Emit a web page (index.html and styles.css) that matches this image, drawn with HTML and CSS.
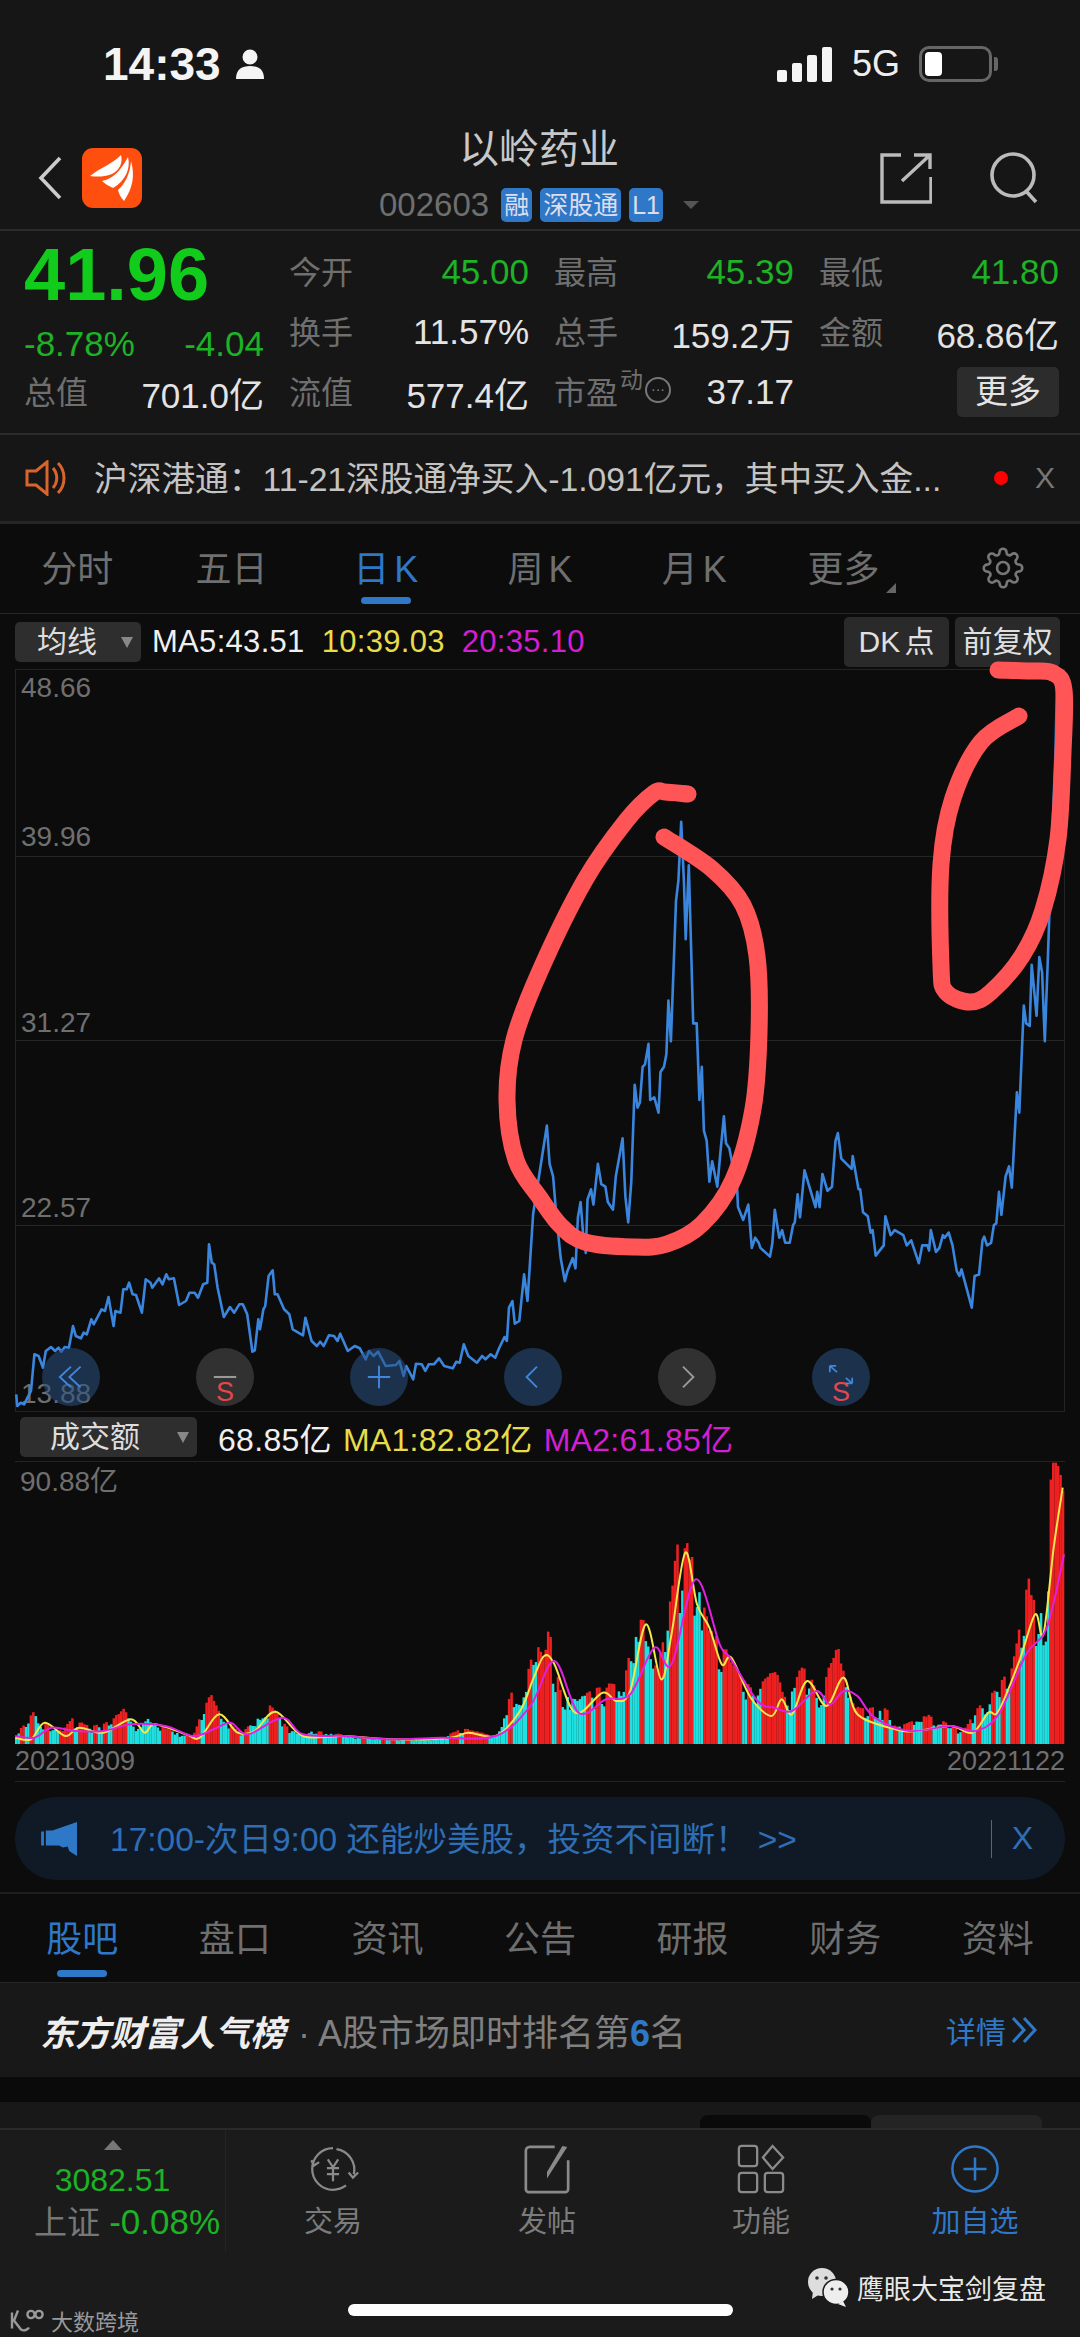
FILE: index.html
```html
<!DOCTYPE html>
<html lang="zh-CN">
<head>
  <meta charset="UTF-8">
  <meta name="viewport" content="width=device-width, initial-scale=1.0">
  <title>以岭药业</title>
  <link rel="stylesheet" href="styles.css">
</head>
<body>
  <div class="page">
    <div class="status-bar">
      <div class="status-time">14:33
        <svg class="person" viewBox="0 0 30 30"><circle cx="15" cy="8" r="7.5"/><path d="M1 30c0-10 6-13 14-13s14 3 14 13z"/></svg>
      </div>
      <div class="status-right">
        <div class="signal"><i class="s1"></i><i class="s2"></i><i class="s3"></i><i class="s4"></i></div>
        <span class="net">5G</span>
        <div class="battery"><i></i></div>
        <div class="battery-cap"></div>
      </div>
    </div>

    <div class="header">
      <div class="header-left">
        <svg class="back" viewBox="0 0 24 44"><path d="M22 2 3 22l19 20" fill="none" stroke="#ccc" stroke-width="3.6"/></svg>
        <svg class="logo" viewBox="0 0 60 60">
          <rect width="60" height="60" rx="11" fill="#ff4f0e"/>
          <path d="M8 28C18 20 30 16 39 7c2 7-1 15-9 19-8 3-15 3-22 2z" fill="#fff"/>
          <path d="M20 33c10-2 18-9 26-24 3 12-3 24-15 31-4-2-8-4-11-7z" fill="#fff"/>
          <path d="M36 42c7-6 12-16 13-29 4 14 2 27-7 40-3-3-5-7-6-11z" fill="#fff"/>
        </svg>
      </div>
      <div class="header-mid">
        <div class="stock-name">以岭药业</div>
        <div class="stock-code">
          <span class="code">002603</span>
          <span class="tag">融</span>
          <span class="tag">深股通</span>
          <span class="tag">L1</span>
          <span class="tri-down"></span>
        </div>
      </div>
      <div class="header-right">
        <svg class="share" viewBox="0 0 52 52"><path d="M21 3H2v47h49V25M22 29 50 3M34 3h16v14" fill="none" stroke="#bbb" stroke-width="3.4"/></svg>
        <svg class="search" viewBox="0 0 52 52"><circle cx="25" cy="23" r="21" fill="none" stroke="#bbb" stroke-width="3.6"/><path d="m38 39 10 11" stroke="#bbb" stroke-width="3.6"/></svg>
      </div>
    </div>

    <div class="quote">
      <div class="price-cell">
        <div class="price">41.96</div>
        <div class="change"><span>-8.78%</span><span>-4.04</span></div>
      </div>
      <div class="kv"><span class="k">今开</span><span class="v up">45.00</span></div>
      <div class="kv"><span class="k">最高</span><span class="v up">45.39</span></div>
      <div class="kv"><span class="k">最低</span><span class="v up">41.80</span></div>
      <div class="kv"><span class="k">换手</span><span class="v">11.57%</span></div>
      <div class="kv"><span class="k">总手</span><span class="v">159.2万</span></div>
      <div class="kv"><span class="k">金额</span><span class="v">68.86亿</span></div>
      <div class="kv"><span class="k">总值</span><span class="v">701.0亿</span></div>
      <div class="kv"><span class="k">流值</span><span class="v">577.4亿</span></div>
      <div class="kv">
        <span class="k pe">市盈<sup>动</sup><span class="more-dot">···</span></span>
        <span class="v">37.17</span>
      </div>
      <div class="kv kv-btn"><span class="more-btn">更多</span></div>
    </div>

    <div class="notice">
      <svg class="horn" viewBox="0 0 42 36"><path d="M2 11h9L22 2v32L11 25H2zM28 8c5 6 5 14 0 20M33 3c8 8 8 22 0 30" fill="none" stroke="#d9652a" stroke-width="3"/></svg>
      <div class="notice-text">沪深港通：11-21深股通净买入-1.091亿元，其中买入金...</div>
      <span class="red-dot"></span>
      <span class="notice-x">X</span>
    </div>

    <div class="tabs k-tabs">
      <div class="tab">分时</div>
      <div class="tab">五日</div>
      <div class="tab active">日 K</div>
      <div class="tab">周 K</div>
      <div class="tab">月 K</div>
      <div class="tab tab-more">更多<i></i></div>
      <div class="tab">
        <svg class="gear" viewBox="0 0 24 24" fill="none" stroke="#777" stroke-width="1.5"><circle cx="12" cy="12" r="3.4"/><path d="M19.4 15a1.65 1.65 0 0 0 .33 1.82l.06.06a2 2 0 0 1 0 2.83 2 2 0 0 1-2.83 0l-.06-.06a1.65 1.65 0 0 0-1.82-.33 1.65 1.65 0 0 0-1 1.51V21a2 2 0 0 1-2 2 2 2 0 0 1-2-2v-.09A1.65 1.65 0 0 0 9 19.4a1.65 1.65 0 0 0-1.82.33l-.06.06a2 2 0 0 1-2.83 0 2 2 0 0 1 0-2.83l.06-.06a1.65 1.65 0 0 0 .33-1.82 1.65 1.65 0 0 0-1.51-1H3a2 2 0 0 1-2-2 2 2 0 0 1 2-2h.09A1.65 1.65 0 0 0 4.6 9a1.65 1.65 0 0 0-.33-1.82l-.06-.06a2 2 0 0 1 0-2.83 2 2 0 0 1 2.83 0l.06.06a1.65 1.65 0 0 0 1.82.33H9a1.65 1.65 0 0 0 1-1.51V3a2 2 0 0 1 2-2 2 2 0 0 1 2 2v.09a1.65 1.65 0 0 0 1 1.51 1.65 1.65 0 0 0 1.82-.33l.06-.06a2 2 0 0 1 2.83 0 2 2 0 0 1 0 2.83l-.06.06a1.65 1.65 0 0 0-.33 1.82V9a1.65 1.65 0 0 0 1.51 1H21a2 2 0 0 1 2 2 2 2 0 0 1-2 2h-.09a1.65 1.65 0 0 0-1.51 1z"/></svg>
      </div>
    </div>

    <div class="chart-bar">
      <div class="select select-ma">均线<i></i></div>
      <span class="ma-text white">MA5:43.51</span>
      <span class="ma-text yellow">10:39.03</span>
      <span class="ma-text magenta">20:35.10</span>
      <div class="bar-btns">
        <span class="bar-btn">DK 点</span>
        <span class="bar-btn">前复权</span>
      </div>
    </div>

    <div class="price-chart">
      <div class="grid-row grid-first"><span>48.66</span><span>39.96</span></div>
      <div class="grid-row grid-b"><span>31.27</span></div>
      <div class="grid-row grid-c"><span>22.57</span></div>
      <div class="grid-row grid-d"><span>13.88</span></div>
      <svg id="priceLine" class="price-line" viewBox="15 668 1050 743"></svg>
      <div class="float-btns">
        <div class="float-btn blue"><svg viewBox="0 0 40 40"><path d="M20 7 6 20l14 13M32 7 18 20l14 13" fill="none" stroke="#3f86dc" stroke-width="2.4"/></svg></div>
        <div class="float-btn grey"><svg viewBox="0 0 40 40"><path d="M6 20h28" stroke="#999" stroke-width="2.6"/></svg><b>S</b></div>
        <div class="float-btn blue"><svg viewBox="0 0 40 40"><path d="M6 20h28M20 6v28" stroke="#3f86dc" stroke-width="2.4"/></svg></div>
        <div class="float-btn blue"><svg viewBox="0 0 40 40"><path d="M25 7 12 20l13 13" fill="none" stroke="#3f86dc" stroke-width="2.4"/></svg></div>
        <div class="float-btn grey"><svg viewBox="0 0 40 40"><path d="m15 7 13 13-13 13" fill="none" stroke="#999" stroke-width="2.4"/></svg></div>
        <div class="float-btn blue"><svg viewBox="0 0 40 40"><path d="M6 6l9 8M6 6v8M6 6h8M34 28l-8-7M34 28v-7M34 28h-8" fill="none" stroke="#3f86dc" stroke-width="2.2"/></svg><b>S</b></div>
      </div>
    </div>

    <div class="chart-bar vol-bar">
      <div class="select select-vol">成交额<i></i></div>
      <span class="ma-text white">68.85亿</span>
      <span class="ma-text yellow">MA1:82.82亿</span>
      <span class="ma-text magenta">MA2:61.85亿</span>
    </div>

    <div class="vol-chart">
      <span class="vol-max">90.88亿</span>
      <svg id="volBars" class="vol-svg" viewBox="15 1461 1050 282"></svg>
    </div>

    <div class="dates"><span>20210309</span><span>20221122</span></div>

    <div class="banner-wrap">
      <div class="banner">
        <svg class="mega" viewBox="0 0 40 36"><path d="M0 10h3v15H0zM5 9h7L38 0v36l-8-5-2-5-5 1-4-2H5z" fill="#2f78c8"/></svg>
        <div class="banner-text">17:00-次日9:00 还能炒美股，投资不间断！ &gt;&gt;</div>
        <span class="banner-sep"></span>
        <span class="banner-x">X</span>
      </div>
    </div>

    <div class="tabs bottom-tabs">
      <div class="tab active">股吧</div>
      <div class="tab">盘口</div>
      <div class="tab">资讯</div>
      <div class="tab">公告</div>
      <div class="tab">研报</div>
      <div class="tab">财务</div>
      <div class="tab">资料</div>
    </div>

    <div class="rank">
      <span class="rank-title">东方财富人气榜</span>
      <span class="rank-text">· A股市场即时排名第<b>6</b>名</span>
      <span class="rank-link">详情<svg viewBox="0 0 30 30"><path d="M3 3l11 12L3 27M14 3l11 12-11 12" fill="none" stroke="#2f78c8" stroke-width="3"/></svg></span>
    </div>
    <div class="strip"></div>
    <div class="sub-area">
      <span class="mini mini-dark"></span>
      <span class="mini mini-light"></span>
    </div>

    <div class="bottom-bar">
      <div class="index-cell">
        <i class="tri-up"></i>
        <div class="index-val">3082.51</div>
        <div class="index-name">上证 <span>-0.08%</span></div>
      </div>
      <div class="nav-item">
        <svg viewBox="0 0 60 52" fill="none" stroke="#8a8a8a" stroke-width="2.6"><path d="M30 2a24 24 0 0 0 0 48c6 0 11-2 15-5M5 16l3 6 6-4M34 3a24 24 0 0 1 20 29M48 30l5 6 6-6M24 15l6 9 6-9M23 25h14M23 32h14M30 24v16"/></svg>
        <span>交易</span>
      </div>
      <div class="nav-item">
        <svg viewBox="0 0 52 52" fill="none" stroke="#8a8a8a" stroke-width="2.8"><path d="M34 3H8a4 4 0 0 0-4 4v40a3 3 0 0 0 3 3h38a3 3 0 0 0 3-3V17"/><path d="M47 3 26 36l0-7 16-27z" fill="#8a8a8a" stroke="none"/></svg>
        <span>发帖</span>
      </div>
      <div class="nav-item">
        <svg viewBox="0 0 52 52" fill="none" stroke="#8a8a8a" stroke-width="2.4"><rect x="3" y="2" width="19" height="21" rx="3"/><path d="M38 2 49 14 38 26 28 14z"/><rect x="3" y="30" width="19" height="20" rx="3"/><rect x="30" y="30" width="19" height="20" rx="3"/></svg>
        <span>功能</span>
      </div>
      <div class="nav-item nav-add">
        <svg viewBox="0 0 52 52" fill="none" stroke="#2f78c8" stroke-width="2.6"><circle cx="26" cy="26" r="23.5"/><path d="M14 26h24M26 14v24"/></svg>
        <span>加自选</span>
      </div>
    </div>

    <div class="wm-left">
      <svg viewBox="0 0 36 24" fill="none" stroke="#999" stroke-width="2.4"><path d="M3 4v16M9 2 5 12l7 9c3 2 7 0 8-2"/><circle cx="22" cy="6" r="3.6"/><circle cx="30" cy="6" r="3.6"/></svg>
      <span>大数跨境</span>
    </div>
    <div class="wm-right">
      <svg viewBox="0 0 44 40"><ellipse cx="15" cy="15" rx="14" ry="14" fill="#ddd"/><path d="M6 24l-1 8 8-5z" fill="#ddd"/><ellipse cx="29" cy="25" rx="13" ry="12.5" fill="#eee" stroke="#1b1b1b" stroke-width="1.5"/><path d="M36 34l3 6-8-3z" fill="#eee"/><circle cx="10" cy="11" r="1.8" fill="#333"/><circle cx="19" cy="11" r="1.8" fill="#333"/><circle cx="25" cy="22" r="1.6" fill="#333"/><circle cx="33" cy="22" r="1.6" fill="#333"/></svg>
      <span>鹰眼大宝剑复盘</span>
    </div>
    <div class="home-bar"></div>

    <svg id="marks" class="marks" viewBox="0 0 1080 2337"></svg>
  </div>
  <script src="chart.js"></script>
</body>
</html>
```

FILE: styles.css
```css
* {
  box-sizing: border-box;
}
body {
  margin: 0;
  background: #0c0c0c;
  font-family: "Liberation Sans", "Noto Sans CJK SC", sans-serif;
  color: #ddd;
}
.page {
  position: relative;
  width: 1080px;
  height: 2337px;
  overflow: hidden;
  background: #0c0c0c;
}

/* status bar */
.status-bar {
  height: 128px;
  padding: 0 82px 0 103px;
  background: #161616;
  display: flex;
  justify-content: space-between;
  align-items: center;
}
.status-time {
  display: flex;
  align-items: center;
  gap: 14px;
  font-size: 46px;
  font-weight: 700;
  color: #f4f4f4;
}
.person {
  width: 30px;
  height: 30px;
  fill: #f4f4f4;
}
.status-right {
  display: flex;
  align-items: center;
}
.signal {
  display: flex;
  align-items: flex-end;
  gap: 5px;
  height: 35px;
  margin-right: 20px;
}
.signal i {
  width: 10px;
  background: #f4f4f4;
  border-radius: 2px;
}
.s1 { height: 12px; }
.s2 { height: 19px; }
.s3 { height: 27px; }
.s4 { height: 35px; }
.net {
  font-size: 36px;
  color: #eee;
  margin-right: 19px;
}
.battery {
  width: 73px;
  height: 36px;
  border: 3px solid #666;
  border-radius: 10px;
  padding: 3px;
}
.battery i {
  display: block;
  width: 17px;
  height: 100%;
  background: #fff;
  border-radius: 4px;
}
.battery-cap {
  width: 4px;
  height: 14px;
  margin-left: 2px;
  background: #666;
  border-radius: 0 3px 3px 0;
}

/* header */
.header {
  height: 103px;
  padding: 0 40px 2px 38px;
  background: #161616;
  border-bottom: 2px solid #2b2b2b;
  display: grid;
  grid-template-columns: 1fr auto 1fr;
  align-items: center;
}
.header-left {
  display: flex;
  align-items: center;
  gap: 20px;
}
.back {
  width: 24px;
  height: 44px;
}
.logo {
  width: 60px;
  height: 60px;
}
.header-mid {
  align-self: start;
  display: flex;
  flex-direction: column;
  align-items: center;
}
.stock-name {
  font-size: 40px;
  line-height: 42px;
  color: #c8c8c8;
}
.stock-code {
  display: flex;
  align-items: center;
  gap: 8px;
  margin-top: 17px;
  height: 36px;
}
.code {
  font-size: 33px;
  color: #6f6f6f;
  margin-right: 4px;
}
.tag {
  height: 34px;
  padding: 0 3px;
  background: #2f78c8;
  border-radius: 5px;
  font-size: 25px;
  line-height: 34px;
  color: #dde;
}
.tri-down {
  margin-left: 12px;
  border-left: 8px solid transparent;
  border-right: 8px solid transparent;
  border-top: 8px solid #555;
}
.header-right {
  display: flex;
  justify-content: flex-end;
  align-items: center;
  gap: 56px;
}
.share, .search {
  width: 52px;
  height: 52px;
}

/* quote */
.quote {
  height: 204px;
  padding: 11px 22px 0 24px;
  background: #161616;
  border-bottom: 2px solid #2b2b2b;
  display: grid;
  grid-template-columns: repeat(4, 240px);
  grid-template-rows: repeat(3, 60px);
  column-gap: 25px;
}
.price-cell {
  grid-row: span 2;
}
.price {
  font-size: 74px;
  font-weight: 700;
  line-height: 66px;
  color: #12cc1c;
}
.change {
  display: flex;
  justify-content: space-between;
  margin-top: 16px;
  font-size: 35px;
  line-height: 40px;
  color: #1cb325;
}
.kv {
  display: flex;
  justify-content: space-between;
  align-items: center;
}
.k {
  font-size: 32px;
  padding-bottom: 5px;
  color: #6f6f6f;
}
.v {
  font-size: 35px;
  color: #e4e4e4;
}
.v.up {
  color: #1cb325;
}
.pe {
  display: flex;
  align-items: center;
}
.pe sup {
  font-size: 23px;
  line-height: 1;
  margin: -18px 2px 0 2px;
}
.more-dot {
  width: 26px;
  height: 26px;
  border: 2px solid #777;
  border-radius: 50%;
  font-size: 14px;
  line-height: 20px;
  text-align: center;
  color: #888;
}
.kv-btn {
  justify-content: flex-end;
}
.more-btn {
  width: 102px;
  height: 50px;
  background: #2c2c2c;
  border-radius: 5px;
  text-align: center;
  font-size: 33px;
  line-height: 50px;
  color: #e4e4e4;
}

/* notice */
.notice {
  height: 89px;
  padding: 0 25px;
  background: #161616;
  border-bottom: 3px solid #262626;
  display: flex;
  align-items: center;
}
.horn {
  width: 42px;
  height: 36px;
  margin-right: 27px;
}
.notice-text {
  flex: 1;
  padding-bottom: 4px;
  font-size: 33.7px;
  color: #c4c4c4;
  white-space: nowrap;
}
.red-dot {
  width: 14px;
  height: 14px;
  background: #f00;
  border-radius: 50%;
  margin-right: 27px;
}
.notice-x {
  font-size: 30px;
  color: #777;
}

/* tab rows */
.tabs {
  display: grid;
  grid-template-columns: repeat(7, 1fr);
  justify-items: center;
  align-items: start;
  border-bottom: 1px solid #262626;
}
.k-tabs {
  height: 90px;
  padding-top: 23px;
}
.bottom-tabs {
  height: 89px;
  padding: 23px 6px 0;
}
.tab {
  font-size: 36px;
  line-height: 46px;
  word-spacing: -5px;
  color: #6f6f6f;
  position: relative;
}
.tab.active {
  color: #2f78c8;
}
.tab.active::after {
  content: "";
  display: block;
  width: 50px;
  height: 7px;
  margin: 4px auto 0;
  background: #2f78c8;
  border-radius: 4px;
}
.bottom-tabs .tab.active::after {
  margin-top: 7px;
}
.tab-more {
  padding-right: 10px;
}
.tab-more i {
  position: absolute;
  right: -6px;
  bottom: 0;
  border-left: 10px solid transparent;
  border-bottom: 10px solid #666;
}
.gear {
  width: 42px;
  height: 42px;
  display: block;
}

/* chart toolbars */
.chart-bar {
  height: 55px;
  padding: 0 20px 0 15px;
  display: flex;
  align-items: center;
  gap: 17px;
}
.select {
  position: relative;
  height: 40px;
  background: #2e2e2e;
  border-radius: 5px;
  font-size: 30px;
  line-height: 40px;
  color: #ddd;
}
.select i {
  position: absolute;
  top: 15px;
  right: 8px;
  border-left: 6px solid transparent;
  border-right: 6px solid transparent;
  border-top: 11px solid #888;
}
.select-ma {
  width: 126px;
  padding-left: 22px;
  margin-right: -6px;
}
.select-vol {
  width: 177px;
  padding-left: 30px;
  margin-right: 10px;
}
.ma-text {
  font-size: 31px;
  letter-spacing: 0.3px;
  white-space: nowrap;
}
.white { color: #f0f0f0; }
.yellow { color: #e8dc4a; }
.magenta { color: #d21fd2; }
.bar-btns {
  margin-left: auto;
  display: flex;
  gap: 6px;
}
.bar-btn {
  width: 105px;
  height: 50px;
  background: #2a2a2a;
  border-radius: 5px;
  text-align: center;
  font-size: 30px;
  line-height: 50px;
  word-spacing: -4px;
  color: #e0e0e0;
}

/* price chart */
.price-chart {
  position: relative;
  height: 743px;
  margin: 0 15px;
  border: 1px solid #232323;
  display: grid;
  grid-template-rows: 187px 184px 185px 1fr;
}
.grid-row {
  padding: 0 0 1px 5px;
  border-bottom: 1px solid #262626;
  display: flex;
  align-items: flex-end;
  font-size: 28px;
  color: #6f6f6f;
}
.grid-first {
  padding-top: 2px;
  padding-bottom: 3px;
  flex-direction: column;
  align-items: flex-start;
  justify-content: space-between;
}
.grid-d {
  border-bottom: 0;
}
.price-line {
  position: absolute;
  left: -1px;
  top: -1px;
  width: 1050px;
  height: 743px;
}
.float-btns {
  position: absolute;
  left: 26px;
  top: 678px;
  display: flex;
  gap: 96px;
}
.float-btn {
  position: relative;
  width: 58px;
  height: 58px;
  border-radius: 50%;
  padding: 13px;
}
.float-btn.blue { background: rgba(40, 80, 130, 0.55); }
.float-btn.grey { background: rgba(80, 80, 80, 0.55); }
.float-btn svg {
  display: block;
  width: 32px;
  height: 32px;
}
.float-btn b {
  position: absolute;
  left: 0;
  right: 0;
  bottom: -2px;
  text-align: center;
  font-size: 27px;
  font-weight: 400;
  color: #e2474a;
}

/* volume chart */
.vol-bar {
  height: 49px;
  padding-left: 20px;
  gap: 11px;
}
.vol-bar .ma-text {
  font-size: 32px;
}
.vol-chart {
  position: relative;
  height: 282px;
  margin: 0 15px;
  border-top: 1px solid #232323;
}
.vol-max {
  position: absolute;
  left: 5px;
  top: -3px;
  font-size: 28px;
  color: #6f6f6f;
}
.vol-svg {
  display: block;
  width: 1050px;
  height: 282px;
}
.dates {
  height: 39px;
  margin: 0 15px;
  border-bottom: 1px solid #232323;
  display: flex;
  justify-content: space-between;
  font-size: 27px;
  line-height: 36px;
  color: #6f6f6f;
}

/* banner */
.banner-wrap {
  height: 112px;
  padding: 15px 15px 14px;
  border-bottom: 2px solid #1e1e1e;
}
.banner {
  height: 83px;
  padding: 0 32px 0 25px;
  background: #101a26;
  border-radius: 41px;
  display: flex;
  align-items: center;
}
.mega {
  width: 40px;
  height: 34px;
  margin-right: 30px;
}
.banner-text {
  flex: 1;
  padding-bottom: 4px;
  font-size: 33.5px;
  color: #2f6eb5;
  white-space: nowrap;
}
.banner-sep {
  width: 1px;
  height: 38px;
  background: #2f6eb5;
  margin-right: 20px;
}
.banner-x {
  font-size: 32px;
  color: #2f6eb5;
}

/* ranking */
.rank {
  height: 94px;
  padding: 0 40px;
  background: #181818;
  display: flex;
  align-items: center;
}
.rank-title {
  font-size: 35px;
  font-weight: 700;
  font-style: italic;
  color: #eee;
  margin-right: 13px;
}
.rank-text {
  flex: 1;
  font-size: 36px;
  color: #808080;
  white-space: nowrap;
}
.rank-text b {
  color: #2f78c8;
}
.rank-link {
  display: flex;
  align-items: center;
  gap: 4px;
  font-size: 30px;
  color: #2f78c8;
}
.rank-link svg {
  width: 30px;
  height: 30px;
}
.strip {
  height: 25px;
  background: #0a0a0a;
}
.sub-area {
  height: 26px;
  padding: 13px 38px 0 0;
  background: #181818;
  display: flex;
  justify-content: flex-end;
}
.mini {
  width: 171px;
  height: 13px;
  border-radius: 8px 8px 0 0;
}
.mini-dark { background: #0a0a0a; }
.mini-light { background: #242424; }

/* bottom nav */
.bottom-bar {
  height: 209px;
  background: #1b1b1b;
  border-top: 2px solid #2a2a2a;
  display: grid;
  grid-template-columns: 226px repeat(4, 214px);
  grid-template-rows: 122px;
}
.index-cell {
  border-right: 1px solid #242424;
  display: flex;
  flex-direction: column;
  align-items: center;
}
.tri-up {
  margin-top: 10px;
  border-left: 9px solid transparent;
  border-right: 9px solid transparent;
  border-bottom: 10px solid #777;
}
.index-val {
  margin-top: 8px;
  font-size: 32px;
  line-height: 44px;
  color: #1cb325;
}
.index-name {
  align-self: flex-start;
  margin: -2px 0 0 34px;
  font-size: 33px;
  line-height: 44px;
  color: #777;
  white-space: nowrap;
}
.index-name span {
  color: #1cb325;
  font-size: 35px;
}
.nav-item {
  padding-top: 14px;
  display: flex;
  flex-direction: column;
  align-items: center;
  gap: 8px;
  font-size: 29px;
  line-height: 40px;
  color: #7c7c7c;
}
.nav-item svg {
  width: 52px;
  height: 50px;
}
.nav-add {
  color: #2f78c8;
}

/* watermarks and home bar */
.wm-left {
  position: absolute;
  left: 9px;
  top: 2304px;
  display: flex;
  align-items: center;
  gap: 6px;
  font-size: 22px;
  color: #999;
}
.wm-left svg {
  width: 36px;
  height: 25px;
}
.wm-right {
  position: absolute;
  left: 807px;
  top: 2267px;
  display: flex;
  align-items: center;
  gap: 6px;
  font-size: 27px;
  color: #e8e8e8;
}
.wm-right svg {
  width: 44px;
  height: 40px;
}
.home-bar {
  position: absolute;
  left: 348px;
  top: 2304px;
  width: 385px;
  height: 12px;
  background: #fff;
  border-radius: 6px;
}
.marks {
  position: absolute;
  left: 0;
  top: 0;
  width: 1080px;
  height: 2337px;
  pointer-events: none;
}
```

FILE: chart.js
```js
// price points read off the picture, left half then right half
const leftPts = [47,1180,50,1215,60,1205,70,1210,80,1190,90,1170,100,1060,112,1065,125,1100,133,1050,148,1038,160,1050,170,1040,178,1052,188,1038,200,1040,212,975,220,1005,235,1012,243,995,252,1000,265,955,272,970,295,925,305,930,315,888,322,930,330,975,335,930,350,935,358,865,368,865,375,845,385,880,395,882,412,935,423,835,437,845,442,860,462,832,472,850,483,820,490,835,505,832,520,912,540,900,550,875,565,875,575,890,590,850,602,845,607,730,615,785,622,790,632,860,650,948,668,918,680,935,695,910,705,910,718,940,733,1052,740,1048,750,955,755,985,765,925,770,915,780,825,792,808,798,880,806,880,825,925,840,940,850,985,880,1003,887,950,905,1020,920,1035,930,1022,940,1035,955,1003,970,1005,980,1020,988,998,1010,1050,1030,1035,1045,1042,1062,1075,1072,1050,1085,1065,1098,1052,1120,1095,1150,1092,1160,1080,1172,1125,1180,1095,1200,1135,1208,1088,1225,1090,1235,1110,1245,1090,1260,1090,1275,1072,1290,1095,1315,1102,1325,1082,1335,1085,1347,1030,1360,1065,1385,1085,1400,1065,1410,1075,1425,1060,1438,1070,1450,1040,1465,1008,1472,1020,1478,920,1488,900,1495,968,1508,960,1522,820,1532,900,1548,640];
const rightPts = [20,930,28,1005,38,1030,48,1110,60,1190,72,1235,80,1215,95,1190,103,1210,110,1110,118,1080,125,1140,133,1180,138,1075,148,1055,155,1085,168,1005,178,1045,190,1050,197,1080,212,1095,220,1030,240,955,248,1070,256,1120,265,1040,275,850,283,895,290,885,298,815,305,810,315,770,320,880,332,875,344,905,350,825,360,815,367,790,373,685,380,765,395,490,402,450,410,335,418,450,423,565,432,420,445,730,455,730,463,880,470,815,476,940,484,960,492,1040,500,1000,515,1050,525,975,534,912,540,965,550,975,560,1010,568,990,575,1090,590,1115,605,1085,615,1170,625,1150,635,1160,640,1170,668,1187,675,1160,682,1095,695,1150,703,1135,712,1160,725,1160,735,1125,740,1120,748,1065,755,1110,768,1018,780,1045,800,1090,805,1060,812,1090,820,1025,835,1058,848,1050,858,960,865,945,875,995,905,1015,908,990,925,1055,930,1055,938,1100,952,1108,960,1140,966,1135,975,1185,998,1165,1003,1108,1018,1145,1030,1135,1055,1145,1065,1165,1078,1155,1100,1200,1110,1165,1125,1165,1130,1175,1135,1135,1150,1178,1160,1170,1170,1145,1175,1150,1187,1140,1198,1165,1210,1215,1218,1225,1224,1212,1254,1287,1262,1225,1275,1222,1285,1155,1290,1148,1298,1165,1310,1160,1318,1125,1325,1122,1333,1060,1340,1105,1352,1030,1362,1010,1370,1052,1385,865,1392,905,1405,695,1412,730,1422,735,1428,615,1442,715,1450,600,1458,630,1466,765,1475,600,1485,400,1497,200,1502,40];

// volume outline and moving averages, x / 1.452, 1400 + y / 3
const volTop = [22,1005,50,925,60,960,90,990,105,950,130,975,160,960,180,920,200,975,215,935,240,980,280,1005,305,870,320,940,350,995,393,905,420,985,450,985,500,1000,570,1015,640,1010,672,980,720,1005,742,875,760,855,778,725,790,760,797,665,815,870,845,870,880,850,905,835,925,650,935,650,955,800,972,600,985,407,995,415,1012,480,1030,680,1050,725,1070,800,1095,860,1125,795,1140,890,1165,780,1190,880,1215,725,1240,915,1287,915,1300,975,1350,940,1400,985,1425,900,1450,850,1470,785,1492,510,1505,630,1518,545,1527,185,1535,185,1545,260];
const ma1 = [22,1010,45,1015,65,965,95,1005,115,980,150,995,190,955,210,995,225,970,270,1000,290,1010,318,940,345,995,370,990,400,932,440,1005,500,1005,570,1015,650,1012,680,995,720,1005,755,930,775,830,790,765,805,790,835,935,875,875,895,900,915,870,938,670,960,835,975,700,995,455,1012,610,1030,680,1048,790,1062,770,1090,890,1120,945,1135,895,1150,940,1172,840,1200,915,1225,830,1245,940,1300,985,1330,990,1380,975,1412,995,1435,935,1450,930,1480,780,1503,640,1515,700,1530,440,1543,260];
const ma2 = [22,1005,50,1010,75,980,110,990,150,990,190,970,240,975,280,1005,310,985,335,965,360,1000,410,950,440,1000,500,1005,570,1015,640,1010,720,1005,770,915,805,780,840,935,880,895,915,880,950,740,975,790,1010,535,1045,730,1060,770,1100,900,1125,920,1150,930,1185,870,1205,910,1225,870,1245,885,1270,950,1320,990,1380,975,1415,990,1450,940,1490,760,1520,680,1545,460];

// the two hand drawn red rings, page coordinates
const ringOne = [688,794,665,792,654,793,626,821,585,880,540,971,514,1040,507,1100,516,1160,540,1198,561,1226,585,1242,633,1247,667,1244,702,1224,733,1180,753,1109,759,1033,757,956,743,905,712,869,664,837];
const ringTwo = [1019,716,981,742,953,798,941,864,941,966,946,992,970,1002,991,992,1022,956,1043,910,1058,839,1063,752,1064,690,1053,673,1030,671,998,670];

function pairs(list, fx, fy) {
  const out = [];
  for (let i = 0; i < list.length; i += 2) {
    out.push([fx(list[i]), fy(list[i + 1])]);
  }
  return out;
}

function straight(points) {
  return points.map(p => p[0].toFixed(1) + ',' + p[1].toFixed(1)).join(' ');
}

function smooth(points) {
  let d = 'M' + points[0][0] + ' ' + points[0][1];
  for (let i = 0; i < points.length - 1; i++) {
    const p0 = points[Math.max(i - 1, 0)];
    const p1 = points[i];
    const p2 = points[i + 1];
    const p3 = points[Math.min(i + 2, points.length - 1)];
    d += ' C' + (p1[0] + (p2[0] - p0[0]) / 6).toFixed(1) + ' ' + (p1[1] + (p2[1] - p0[1]) / 6).toFixed(1)
      + ' ' + (p2[0] - (p3[0] - p1[0]) / 6).toFixed(1) + ' ' + (p2[1] - (p3[1] - p1[1]) / 6).toFixed(1)
      + ' ' + p2[0].toFixed(1) + ' ' + p2[1].toFixed(1);
  }
  return d;
}

// price line
const pricePts = pairs(leftPts, x => x / 2.904, y => 1000 + y / 3)
  .concat(pairs(rightPts, x => 540 + x / 2.904, y => 650 + y / 1.96));
document.getElementById('priceLine').innerHTML =
  '<polyline fill="none" stroke="#3a86de" stroke-width="2.6" stroke-linejoin="round" points="' + straight(pricePts) + '"/>';

// volume bars
const volX = x => x / 1.452;
const volY = y => 1400 + y / 3;
const outline = pairs(volTop, volX, volY);

function outlineAt(x) {
  for (let i = 0; i < outline.length - 1; i++) {
    if (x >= outline[i][0] && x <= outline[i + 1][0]) {
      const t = (x - outline[i][0]) / (outline[i + 1][0] - outline[i][0]);
      return outline[i][1] + (outline[i + 1][1] - outline[i][1]) * t;
    }
  }
  return 1743;
}

function noise(i) {
  const s = Math.sin(i * 12.9898) * 43758.5453;
  return s - Math.floor(s);
}

let bars = '';
const step = 2.44;
for (let x = 15, i = 0; x < 1064; x += step, i++) {
  const top = outlineAt(x + step / 2);
  // short runs share a colour, red bars reach the outline and the last ones are the full peak
  const lastPeak = x > 1048 && x < 1060;
  const isRed = lastPeak || noise(Math.floor(i / 2)) > 0.5;
  const scale = lastPeak ? 1 : isRed ? 0.93 + noise(i + 900) * 0.07 : 0.6 + noise(i + 400) * 0.3;
  const h = (1743 - top) * scale;
  const color = isRed ? '#ee2020' : '#1fe0e0';
  bars += '<rect x="' + x.toFixed(2) + '" y="' + (1743 - h).toFixed(1) + '" width="' + (step + 0.1) + '" height="' + h.toFixed(1) + '" fill="' + color + '"/>';
}
bars += '<path fill="none" stroke="#f2e84a" stroke-width="2" d="' + smooth(pairs(ma1, volX, volY)) + '"/>';
bars += '<path fill="none" stroke="#e020e0" stroke-width="2" d="' + smooth(pairs(ma2, volX, volY)) + '"/>';
document.getElementById('volBars').innerHTML = bars;

// red rings over everything
const same = v => v;
document.getElementById('marks').innerHTML =
  '<g fill="none" stroke="#ff5557" stroke-width="17" stroke-linecap="round" stroke-linejoin="round">'
  + '<path d="' + smooth(pairs(ringOne, same, same)) + '"/>'
  + '<path d="' + smooth(pairs(ringTwo, same, same)) + '"/></g>';
```
